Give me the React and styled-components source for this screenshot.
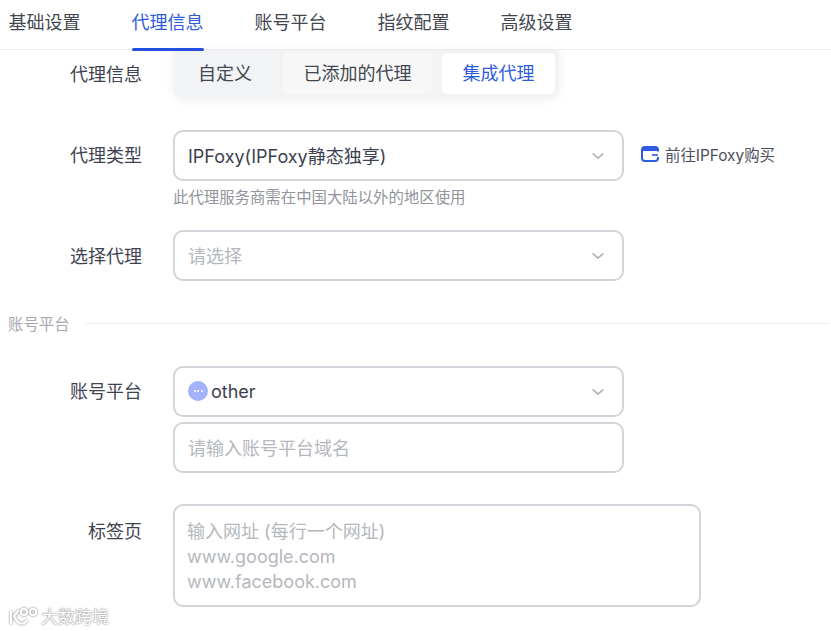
import React from 'react';
import styled, { createGlobalStyle } from 'styled-components';

const Global = createGlobalStyle`
  html, body { margin: 0; padding: 0; background: #fff; overflow: hidden; }
  body { font-family: Inter, "Noto Sans CJK SC", sans-serif; color: #3c4150; }
  * { box-sizing: border-box; }
`;
const Page = styled.div`position: relative; width: 831px; height: 631px; overflow: hidden; background: #fff;`;
const TabBar = styled.div`display: flex; gap: 51px; height: 50px; padding-left: 8.5px; border-bottom: 1px solid #eeeff2;`;
const Tab = styled.div`
  position: relative; width: 72px; height: 50px; line-height: 45px; font-size: 18px; white-space: nowrap;
  color: ${p => (p.$active ? '#2f5be0' : '#42464f')};
  ${p => p.$active && `&::after { content: ""; position: absolute; left: 0; right: 0; bottom: -1px; height: 3px; border-radius: 2px; background: #2350e0; }`}
`;
const Body = styled.div`display: flex; flex-direction: column;`;
const Row = styled.div`display: flex; align-items: flex-start; margin-top: ${p => p.$mt || 0}px;`;
const Label = styled.div`
  width: 142px; flex: none; text-align: right; font-size: 18px; color: #3f4350; white-space: nowrap;
  padding-top: ${p => p.$pt ?? 3}px; line-height: 46px; height: ${p => p.$h ?? 46}px;
`;
const Field = styled.div`margin-left: 31px; display: flex; flex-direction: column; gap: 5px;`;
const Segments = styled.div`
  display: flex; gap: 10px; width: 386px; height: 48px; padding: 3px 4px 4px 0;
  background: #f2f3f5; border-radius: 0 0 10px 10px; box-shadow: 0 2px 8px rgba(60,70,90,.08);
`;
const Segment = styled.div`
  height: 41px; line-height: 41px; text-align: center; font-size: 18px; border-radius: 5px;
  width: ${p => p.$w}px; white-space: nowrap;
  background: ${p => (p.$active ? '#fff' : p.$plain ? 'transparent' : '#f7f7f8')};
  color: ${p => (p.$active ? '#2f5be0' : '#42464f')};
  padding-left: ${p => p.$pl || 0}px;
`;
const Select = styled.div`
  display: flex; align-items: center; width: 451px; height: 51px; padding: 0 17px 0 13px;
  border: 2px solid #d2d4d9; border-radius: 10px; font-size: 18px; background: #fff; color: #3c4150;
`;
const Value = styled.span`flex: 1; display: flex; align-items: center; gap: 3px; white-space: nowrap; margin-top: -1px;`;
const Placeholder = styled.span`flex: 1; color: #b4b7bd; white-space: nowrap; margin-top: -1px;`;
const Chevron = styled.svg`width: 14px; height: 14px; flex: none; color: #b2b5bb;`;
const Hint = styled.div`font-size: 15.4px; line-height: 22px; margin-top: 6px; color: #91949c;`;
const BuyLink = styled.div`display: flex; align-items: center; gap: 6px; margin-left: 17px; height: 48px; font-size: 15.4px; color: #4c505a; white-space: nowrap;`;
const Divider = styled.div`display: flex; align-items: center; gap: 15px; margin-top: 30px; padding: 0 1px 0 8px; height: 24px; font-size: 15.4px; color: #a6a9b0;`;
const Rule = styled.div`flex: 1; height: 1px; background: #eceef0;`;
const OtherDot = styled.span`
  display: inline-flex; align-items: center; justify-content: center; gap: 1.5px; width: 20px; height: 20px; border-radius: 50%; background: #a3b3fb;
  & > i { width: 2px; height: 2px; background: #fff; border-radius: 50%; }
`;
const TextArea = styled.div`
  width: 528px; height: 103px; padding: 13px 12px; border: 2px solid #d2d4d9; border-radius: 10px;
  font-size: 18px; line-height: 25px; color: #b4b7bd; white-space: pre-line;
`;
const Watermark = styled.div`
  position: absolute; left: 8px; top: 605px; display: flex; align-items: center; gap: 3px; font-size: 17px; line-height: 24px; color: #fff;
  text-shadow: 0 0 2px #8c8c8c, 0 0 1px #8c8c8c;
`;

const ChevronIcon = () => (
  <Chevron viewBox="0 0 16 16" fill="none" stroke="currentColor" strokeWidth="2" strokeLinecap="round" strokeLinejoin="round">
    <path d="M2.5 5.5 8 10.5l5.5-5" />
  </Chevron>
);

export default function App() {
  return (
    <Page>
      <Global />
      <TabBar>
        <Tab>基础设置</Tab>
        <Tab $active>代理信息</Tab>
        <Tab>账号平台</Tab>
        <Tab>指纹配置</Tab>
        <Tab>高级设置</Tab>
      </TabBar>
      <Body>
        <Row>
          <Label $pt={2}>代理信息</Label>
          <Field>
            <Segments>
              <Segment $w={100} $pl={4} $plain>自定义</Segment>
              <Segment $w={149}>已添加的代理</Segment>
              <Segment $w={113} $active>集成代理</Segment>
            </Segments>
          </Field>
        </Row>
        <Row $mt={32}>
          <Label>代理类型</Label>
          <Field>
            <Select>
              <Value>IPFoxy(IPFoxy静态独享)</Value>
              <ChevronIcon />
            </Select>
          </Field>
          <BuyLink>
            <svg width="18" height="16" viewBox="0 0 18 16" fill="none">
              <path d="M17 5.5V4a3 3 0 0 0-3-3H4a3 3 0 0 0-3 3v8a3 3 0 0 0 3 3h10a3 3 0 0 0 3-3v-1" stroke="#2f5be0" strokeWidth="2" />
              <path d="M2 3.5h14" stroke="#2f5be0" strokeWidth="3" />
              <path d="M11 9h6" stroke="#2f5be0" strokeWidth="1.6" />
            </svg>
            前往IPFoxy购买
          </BuyLink>
        </Row>
        <Row>
          <Label $pt={0} $h={22} />
          <Field><Hint>此代理服务商需在中国大陆以外的地区使用</Hint></Field>
        </Row>
        <Row $mt={21}>
          <Label $pt={4}>选择代理</Label>
          <Field>
            <Select>
              <Placeholder>请选择</Placeholder>
              <ChevronIcon />
            </Select>
          </Field>
        </Row>
        <Divider>账号平台<Rule /></Divider>
        <Row $mt={31}>
          <Label>账号平台</Label>
          <Field>
            <Select>
              <Value><OtherDot><i /><i /><i /></OtherDot>other</Value>
              <ChevronIcon />
            </Select>
            <Select><Placeholder>请输入账号平台域名</Placeholder></Select>
          </Field>
        </Row>
        <Row $mt={31}>
          <Label $pt={5}>标签页</Label>
          <Field>
            <TextArea>{'输入网址 (每行一个网址)\nwww.google.com\nwww.facebook.com'}</TextArea>
          </Field>
        </Row>
      </Body>
      <Watermark>
        <svg width="30" height="22" viewBox="0 0 30 22" fill="none" stroke="#fff" strokeWidth="2.2" style={{ filter: 'drop-shadow(0 0 1px #777)' }}>
          <path d="M3 5v13M11 4 6 10l3 5c3 4 8 3 10-1" />
          <circle cx="16" cy="6" r="3.2" />
          <circle cx="25" cy="6" r="3.2" />
        </svg>
        大数跨境
      </Watermark>
    </Page>
  );
}
